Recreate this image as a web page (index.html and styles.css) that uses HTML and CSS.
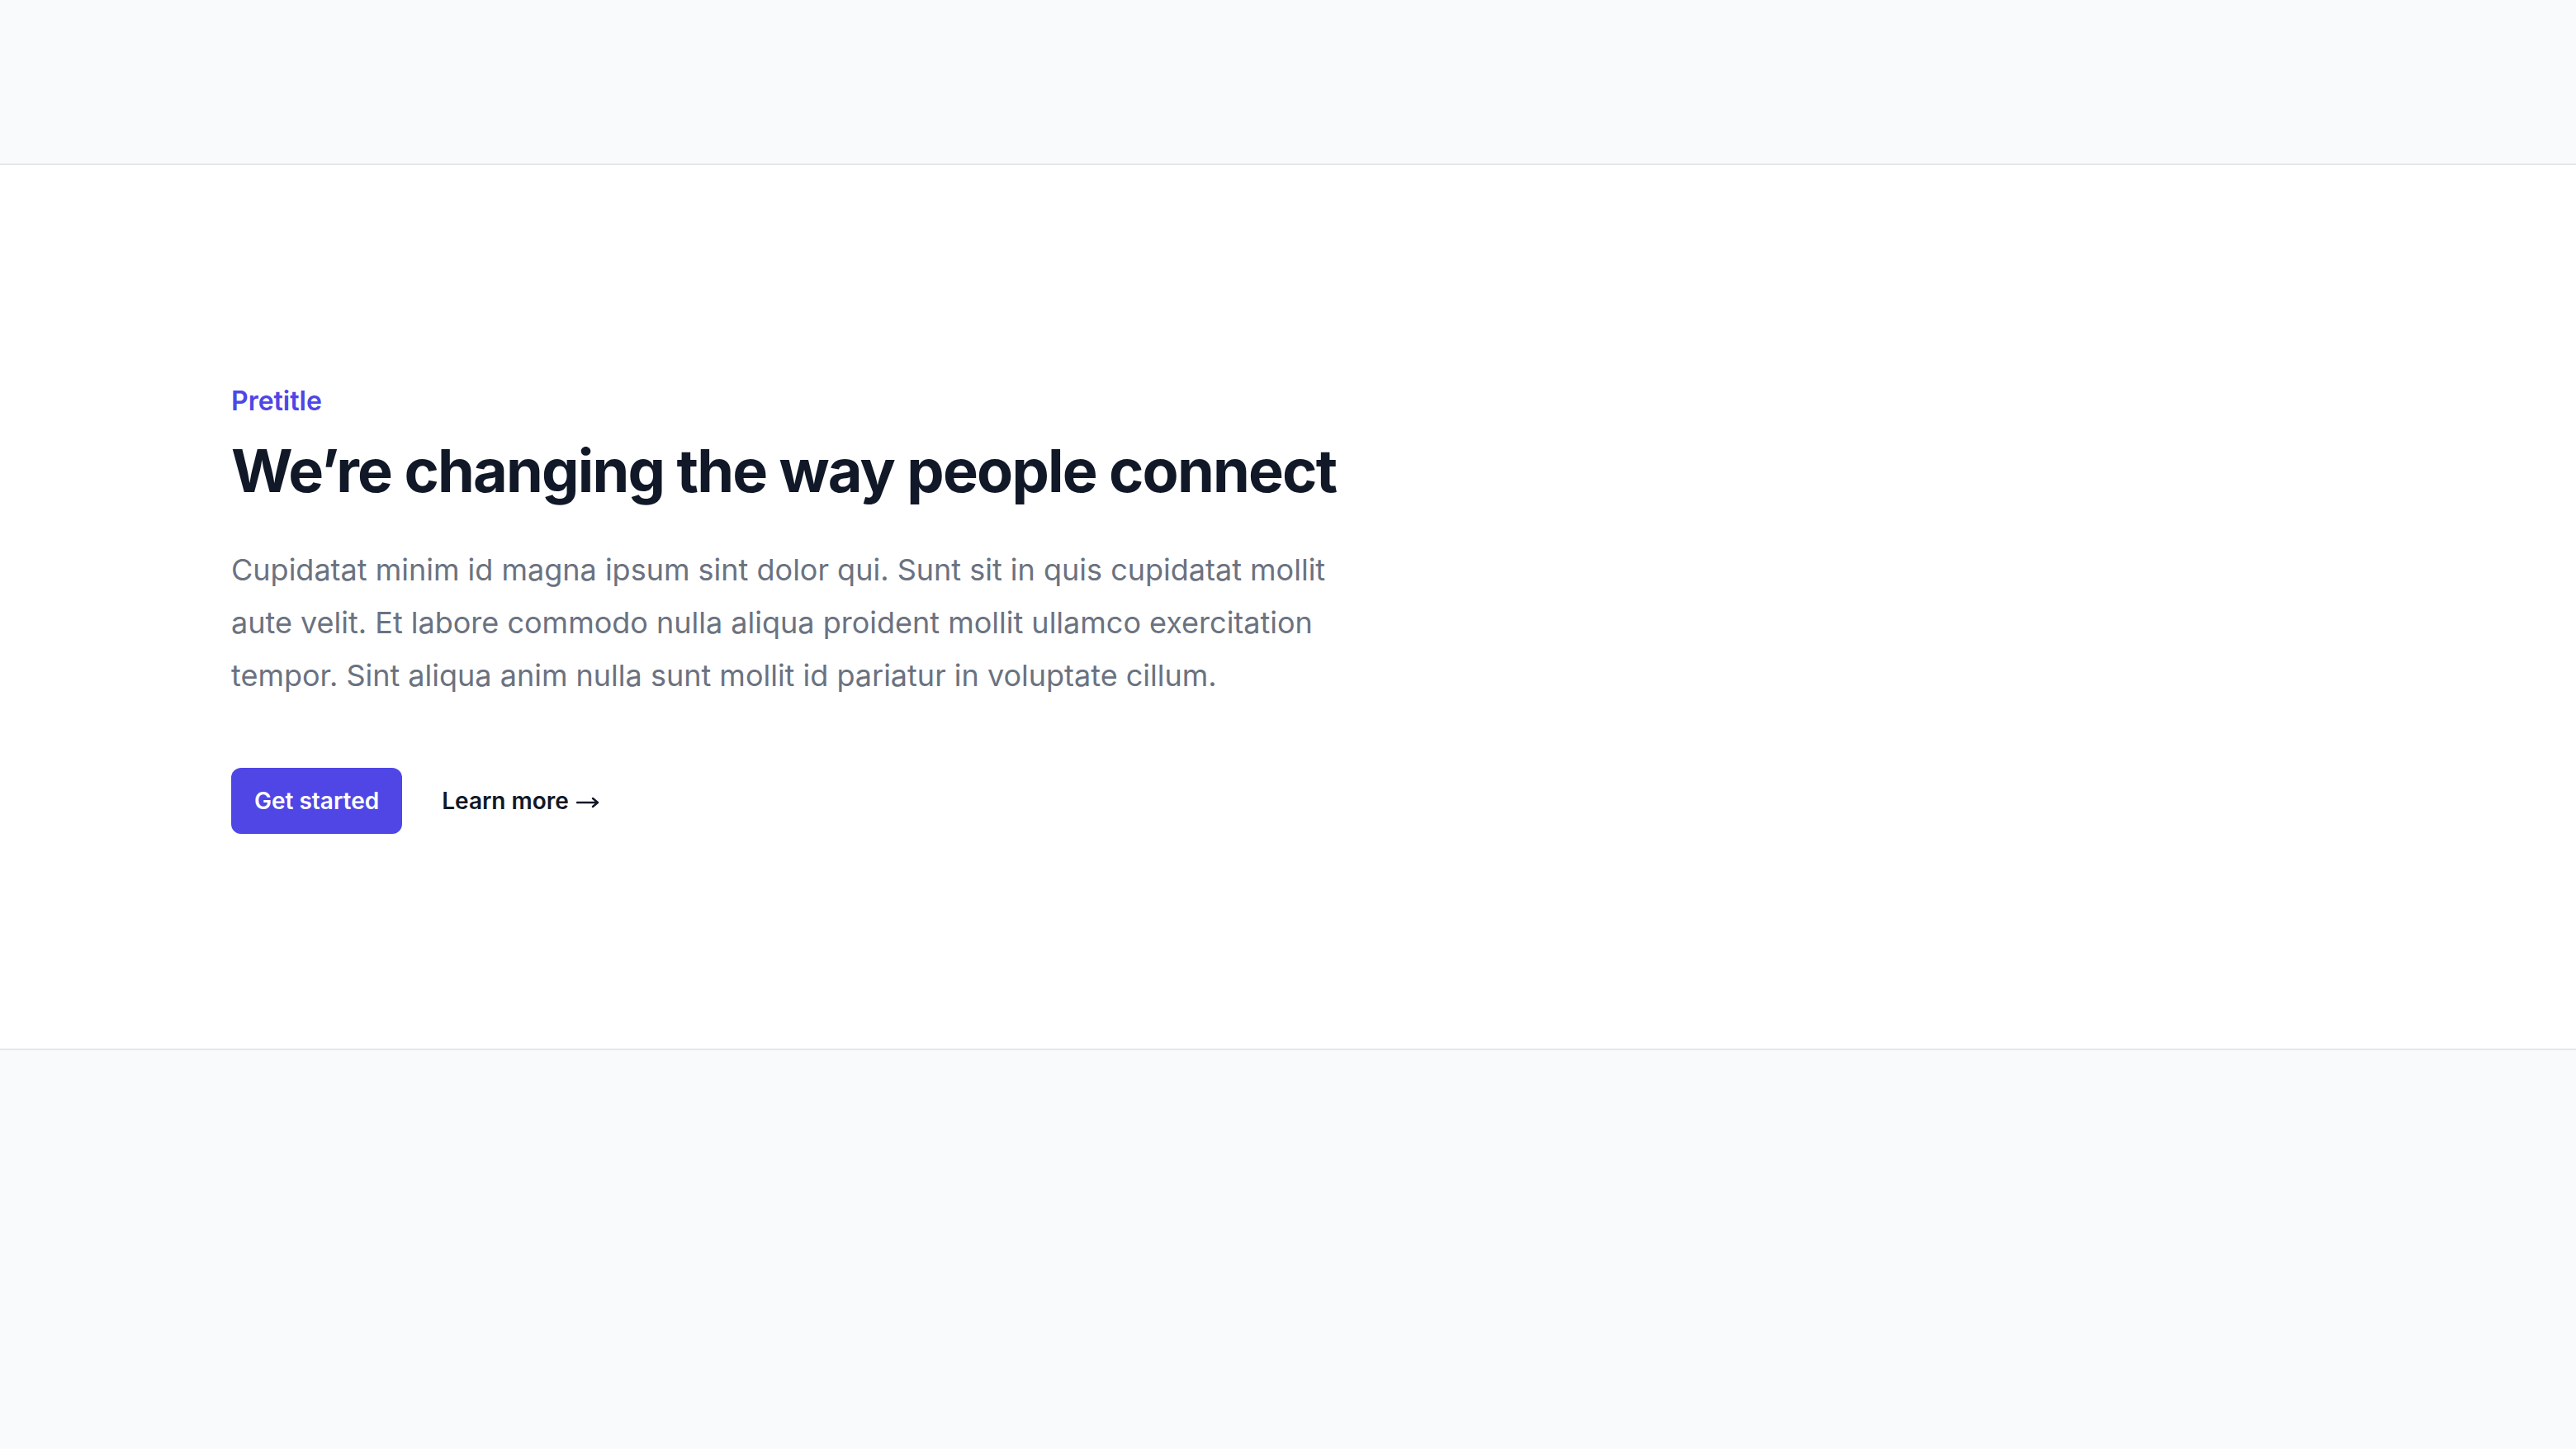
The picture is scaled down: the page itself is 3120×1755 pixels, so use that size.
FILE: index.html
```html
<!DOCTYPE html>
<html lang="en">
<head>
  <meta charset="UTF-8" />
  <meta name="viewport" content="width=device-width, initial-scale=1.0"/>
  <title>Hero</title>
  <link rel="stylesheet" href="styles.css">
</head>
<body>
  <div class="top-band"></div>

  <!-- Hero -->
  <section class="hero">
    <div class="hero-inner">
      <p class="pretitle">Pretitle</p>
      <h1 class="hero-title">We’re changing the way people connect</h1>
      <p class="hero-text">Cupidatat minim id magna ipsum sint dolor qui. Sunt sit in quis cupidatat mollit aute velit. Et labore commodo nulla aliqua proident mollit ullamco exercitation tempor. Sint aliqua anim nulla sunt mollit id pariatur in voluptate cillum.</p>
      <div class="hero-actions">
        <a href="#" class="btn-primary">Get started</a>
        <a href="#" class="btn-link">Learn more
          <svg class="arrow" width="28" height="16" viewBox="0 0 28 16" aria-hidden="true">
            <path d="M1 8h25M20 3l6 5-6 5" fill="none" stroke="currentColor" stroke-width="2.4" stroke-linecap="round" stroke-linejoin="round"/>
          </svg>
        </a>
      </div>
    </div>
  </section>

  <div class="bottom-band"></div>
</body>
</html>
```

FILE: styles.css
```css
html, body {
  height: 100%;
}

body {
  margin: 0;
  font-family: Inter, "Noto Sans", sans-serif;
  background: #f9fafb;
  display: flex;
  flex-direction: column;
}

.top-band {
  height: 198px;
  border-bottom: 2px solid #e5e7eb;
}

.hero {
  background: #fff;
  border-bottom: 2px solid #e5e7eb;
  padding: 258px 280px 260px;
}

.hero-inner {
  max-width: 1344px;
}

.pretitle {
  margin: 0;
  font-size: 32px;
  line-height: 56px;
  font-weight: 600;
  color: #4f46e5;
}

.hero-title {
  margin: 16px 0 0;
  font-size: 72px;
  line-height: 80px;
  font-weight: 700;
  letter-spacing: -0.025em;
  color: #111827;
}

.hero-text {
  margin: 48px 0 0;
  font-size: 36px;
  line-height: 64px;
  color: #6b7280;
}

.hero-actions {
  margin-top: 80px;
  display: flex;
  align-items: center;
  gap: 48px;
}

.btn-primary {
  display: inline-block;
  background: #4f46e5;
  color: #fff;
  text-decoration: none;
  font-size: 28px;
  line-height: 40px;
  font-weight: 600;
  padding: 20px 28px;
  border-radius: 12px;
}

.btn-link {
  display: flex;
  align-items: center;
  gap: 9px;
  color: #111827;
  text-decoration: none;
  font-size: 28px;
  line-height: 48px;
  font-weight: 600;
}

.arrow {
  margin-top: 4px;
}

.bottom-band {
  flex: 1;
}
```
